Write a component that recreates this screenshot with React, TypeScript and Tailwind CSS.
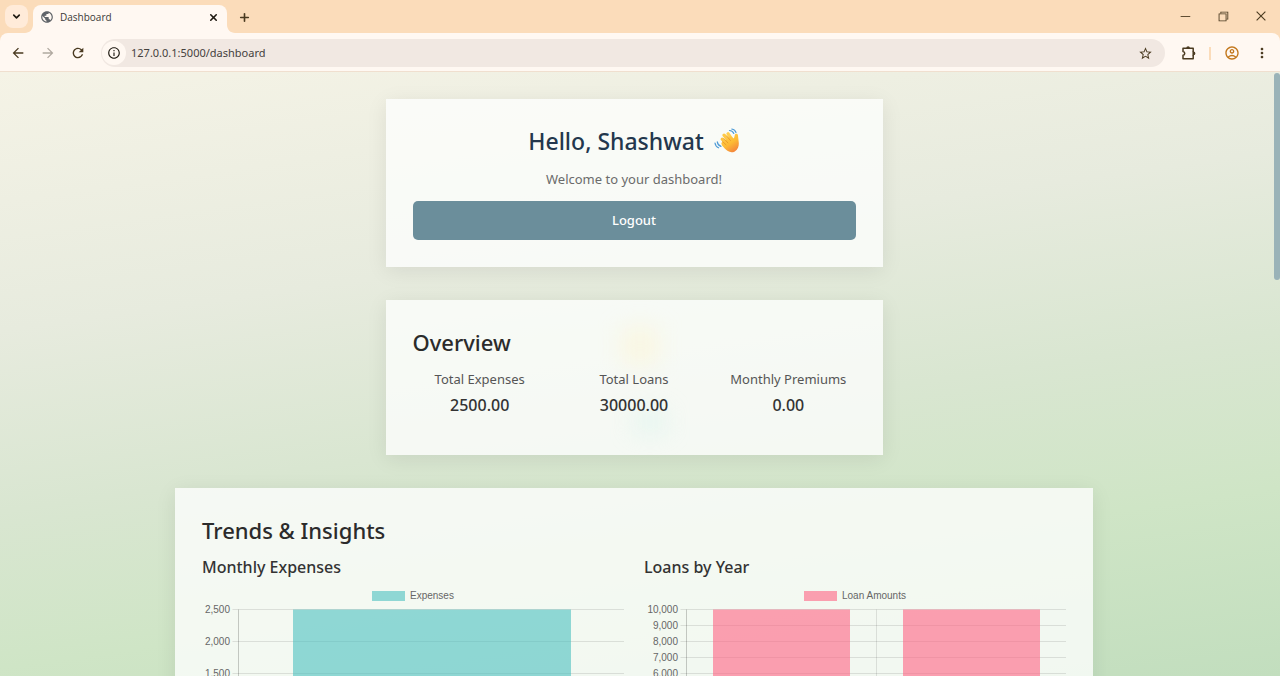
import {
  MdArrowBack,
  MdArrowForward,
  MdInfoOutline,
  MdMoreVert,
  MdOutlineAccountCircle,
  MdPublic,
  MdRefresh,
  MdStarBorder,
} from "react-icons/md";
import { VscChromeClose, VscChromeMinimize, VscChromeRestore } from "react-icons/vsc";
import { ChevronDown, Plus, X } from "lucide-react";
import type { ReactNode } from "react";

function TabFlare({ flip }: { flip?: boolean }) {
  return (
    <svg
      viewBox="0 0 8 8"
      aria-hidden="true"
      className={flip ? "absolute bottom-0 left-full size-2 -scale-x-100" : "absolute right-full bottom-0 size-2"}
    >
      <path d="M8 0v8H0c4.400 0 8-3.600 8-8z" fill="#fff8f2" />
    </svg>
  );
}

function IconButton({ label, children, className = "" }: { label: string; children: ReactNode; className?: string }) {
  return (
    <button type="button" aria-label={label} className={`flex shrink-0 items-center justify-center ${className}`}>
      {children}
    </button>
  );
}

function PuzzleIcon() {
  return (
    <svg viewBox="0 0 16 16" className="size-4" aria-hidden="true">
      <path
        d="M12.200 6.500V3.200H2v3.400c2.300.4 2.300 3.300 0 3.700v3.500h10.200V10"
        fill="none"
        stroke="#4a3a20"
        strokeWidth="1.500"
        strokeLinejoin="round"
      />
      <path d="M12.200 6v4.500" stroke="#4a3a20" strokeWidth="1.500" />
      <path d="M5.300 3a1.800 1.800 0 0 1 3.600 0zM12.600 6.600a1.800 1.800 0 0 1 0 3.600z" fill="#4a3a20" />
    </svg>
  );
}

function WavingHand() {
  return (
    <svg viewBox="0 0 26 26" role="img" aria-label="waving hand" className="size-[26px]">
      <defs>
        <linearGradient id="skin" x1="0" y1="0" x2="0.600" y2="1">
          <stop offset="0" stopColor="#ffd152" />
          <stop offset="0.600" stopColor="#fdbb35" />
          <stop offset="1" stopColor="#f58a3c" />
        </linearGradient>
      </defs>
      <g strokeLinecap="round" fill="none">
        <path d="M9 15.500l5 4.500" stroke="#fcbc38" strokeWidth="3.200" />
        <path d="M8.200 11.200l6 6" stroke="#fdc443" strokeWidth="3.200" />
        <path d="M10 7.200l6.500 7.500" stroke="#fec948" strokeWidth="3.300" />
        <path d="M14 5.800l5 7" stroke="#ffce50" strokeWidth="3.200" />
      </g>
      <path
        d="M9 14l7-6 3.500 2.500c.8-.8 1-2.200 1.300-3.600.4-1.600 2.700-1.600 3.100.2.300 1.700.3 3.600.7 5.800.5 3.200.3 6.200-1.800 8.800-2.300 2.800-6 3.300-9 1.400-2.300-1.500-4.500-4-6-6z"
        fill="url(#skin)"
      />
      <path
        d="M9.900 10.500l4 4.400M12.800 8l3.600 4.500M8.600 13.600l3.400 3.200"
        fill="none"
        stroke="#e38d22"
        strokeWidth="0.700"
        strokeLinecap="round"
      />
      <path
        d="M15.500 2.500c2.200.1 3.600 1.100 4.300 3M17.800 1c2.200.4 3.600 1.600 4.200 3.500M3.300 13.800c.3 2.300 1.500 3.800 3.700 4.600M1 15c.3 2.300 1.500 3.900 3.600 4.800"
        fill="none"
        stroke="#4d9ad6"
        strokeWidth="1.200"
        strokeLinecap="round"
      />
    </svg>
  );
}

type BarChartProps = {
  legend: string;
  color: string;
  ticks: string[];
  labelRight: number;
  axisX: number;
  bars: { x: number; width: number }[];
  legendX: number;
  separators: number[];
};

const CHART_TOP = 24.5;
const CHART_BOTTOM = 184.5;
const CHART_RIGHT = 422;

function BarChart({ legend, color, ticks, labelRight, axisX, bars, legendX, separators }: BarChartProps) {
  const step = (CHART_BOTTOM - CHART_TOP) / (ticks.length - 1);
  return (
    <svg
      viewBox="0 0 422 211"
      role="img"
      aria-label={legend}
      className="block w-full font-['Liberation_Sans',Arial,sans-serif] text-[10px]"
    >
      {ticks.map((tick, i) => (
        <g key={tick}>
          <path d={`M${axisX - 6} ${CHART_TOP + i * step}H${CHART_RIGHT}`} stroke="#000" strokeOpacity="0.1" />
          <text x={labelRight} y={CHART_TOP + i * step + 3} textAnchor="end" fill="#666">
            {tick}
          </text>
        </g>
      ))}
      {[axisX, ...separators].map((x, i) => (
        <path key={x} d={`M${x} ${CHART_TOP}V${CHART_BOTTOM + 6}`} stroke="#000" strokeOpacity={i === 0 ? 0.2 : 0.1} />
      ))}
      {bars.map((bar) => (
        <rect
          key={bar.x}
          x={bar.x}
          y={CHART_TOP}
          width={bar.width}
          height={CHART_BOTTOM - CHART_TOP}
          fill={color}
          fillOpacity="0.6"
        />
      ))}
      <rect x={legendX} y="6" width="33" height="10" fill={color} fillOpacity="0.6" />
      <text x={legendX + 38} y="14" fill="#666">
        {legend}
      </text>
    </svg>
  );
}

function Card({ children, className }: { children: ReactNode; className: string }) {
  return (
    <section className={`w-full bg-[#fdfefd]/80 p-[27px] shadow-[0_4px_20px_rgba(0,0,0,0.08)] ${className}`}>
      {children}
    </section>
  );
}

const stats = [
  { label: "Total Expenses", value: "2500.00" },
  { label: "Total Loans", value: "30000.00" },
  { label: "Monthly Premiums", value: "0.00" },
];

function BrowserChrome() {
  return (
    <header className="shrink-0 bg-[#fbdcba] text-[#4a3a20]">
      <div className="flex h-[33px] items-end">
        <IconButton label="Search tabs" className="mb-[5px] ml-[5px] size-[23px] rounded-lg bg-[#ffebd9] text-[#1f1a12]">
          <ChevronDown className="size-[11px]" strokeWidth={3.5} />
        </IconButton>
        <div className="relative ml-[5px] flex h-7 w-[194px] items-center rounded-t-lg bg-[#fff8f2] pr-2 pb-1 pl-[7px]">
          <TabFlare />
          <MdPublic className="size-[14px] text-[#5f6368]" />
          <span className="ml-1.5 flex-1 font-['Open_Sans','Noto_Sans',sans-serif] text-[10px] text-[#3c3a38]">
            Dashboard
          </span>
          <IconButton label="Close tab" className="text-[#1f1a12]">
            <X className="size-[11px]" strokeWidth={3.5} />
          </IconButton>
          <TabFlare flip />
        </div>
        <IconButton label="New tab" className="mb-2 ml-[9px] size-4">
          <Plus className="size-[13px]" strokeWidth={3} />
        </IconButton>
        <div className="mb-[10px] ml-auto flex items-center gap-6 pr-3">
          <IconButton label="Minimize">
            <VscChromeMinimize className="size-[14px]" />
          </IconButton>
          <IconButton label="Restore">
            <VscChromeRestore className="size-[14px]" />
          </IconButton>
          <IconButton label="Close window">
            <VscChromeClose className="size-[14px]" />
          </IconButton>
        </div>
      </div>
      <div className="flex h-[39px] items-center rounded-t-lg border-b border-[#f0dfcf] bg-[#fff8f2] pt-0.5 pr-[10px] pl-[11px]">
        <div className="flex gap-4">
          <IconButton label="Back" className="size-[14px]">
            <MdArrowBack className="size-4 shrink-0" />
          </IconButton>
          <IconButton label="Forward" className="size-[14px] text-[#b0a9a0]">
            <MdArrowForward className="size-4 shrink-0" />
          </IconButton>
          <IconButton label="Reload" className="size-[14px]">
            <MdRefresh className="size-4 shrink-0" />
          </IconButton>
        </div>
        <div className="ml-4 flex h-7 flex-1 items-center rounded-full bg-[#f1e8e2] pr-3 pl-px">
          <IconButton label="Site information" className="size-6 rounded-full bg-[#fff8f2] text-[#1f1a12]">
            <MdInfoOutline className="size-[14px]" />
          </IconButton>
          <input
            aria-label="Address"
            defaultValue="127.0.0.1:5000/dashboard"
            className="ml-[5px] min-w-0 flex-1 bg-transparent text-[11px] text-[#45413d] outline-none"
          />
          <IconButton label="Bookmark">
            <MdStarBorder className="size-[15px]" />
          </IconButton>
        </div>
        <IconButton label="Extensions" className="ml-4 size-4">
          <PuzzleIcon />
        </IconButton>
        <span className="ml-3 h-[13px] w-0.5 bg-[#fbdcba]" />
        <IconButton label="Profile" className="ml-[13px] text-[#c2761a]">
          <MdOutlineAccountCircle className="size-4" />
        </IconButton>
        <IconButton label="Menu" className="ml-[14px]">
          <MdMoreVert className="size-4" />
        </IconButton>
      </div>
    </header>
  );
}

export default function App() {
  return (
    <div className="flex h-screen flex-col font-['Noto_Sans','Open_Sans',sans-serif]">
      <BrowserChrome />
      <div className="flex min-h-0 flex-1 bg-[linear-gradient(172deg,#f5f3e6_0%,#e7ebde_33%,#d9e6d1_56%,#cfe5c6_76%,#c2debe_100%)]">
        <main className="flex min-w-0 flex-1 flex-col items-center gap-[33px] overflow-y-auto pt-[27px] pb-8 [scrollbar-width:none] *:shrink-0">
          <Card className="max-w-[497px] text-center">
            <h1 className="flex items-center justify-center gap-[10px] text-[23px] leading-[30px] font-medium text-[#23374d]">
              Hello, Shashwat
              <WavingHand />
            </h1>
            <p className="mt-[13px] text-[13px] leading-5 text-[#6b6b6b]">Welcome to your dashboard!</p>
            <button
              type="button"
              className="mt-3 block h-[39px] w-full rounded-[5px] bg-[#6b8e9b] text-[13px] font-medium text-white"
            >
              Logout
            </button>
          </Card>

          <Card className="relative max-w-[497px]">
            <div
              aria-hidden="true"
              className="pointer-events-none absolute top-7 left-1/2 h-9 w-9 -translate-x-3 bg-[#fff3c4]/40 blur-md"
            />
            <div
              aria-hidden="true"
              className="pointer-events-none absolute bottom-6 left-1/2 h-5 w-8 bg-[#c8efe8]/40 blur-md"
            />
            <h2 className="relative text-[22px] leading-[30px] font-medium text-[#2b2b2b]">Overview</h2>
            <dl className="relative mt-3 mb-[11px] grid grid-cols-3 gap-5 text-center">
              {stats.map((stat) => (
                <div key={stat.label}>
                  <dt className="text-[13px] leading-5 whitespace-nowrap text-[#555]">{stat.label}</dt>
                  <dd className="mt-1 text-base leading-6 font-medium text-[#333]">{stat.value}</dd>
                </div>
              ))}
            </dl>
          </Card>

          <Card className="max-w-[918px]">
            <h2 className="text-[22px] leading-[30px] font-medium text-[#2b2b2b]">Trends &amp; Insights</h2>
            <div className="mt-[10px] grid grid-cols-2 gap-5">
              <div>
                <h3 className="mb-1.5 text-base leading-6 font-medium text-[#333]">Monthly Expenses</h3>
                <BarChart
                  legend="Expenses"
                  color="#4bc0c0"
                  ticks={["2,500", "2,000", "1,500", "1,000", "500", "0"]}
                  labelRight={28}
                  axisX={36.5}
                  bars={[{ x: 91, width: 278 }]}
                  legendX={170}
                  separators={[]}
                />
              </div>
              <div>
                <h3 className="mb-1.5 text-base leading-6 font-medium text-[#333]">Loans by Year</h3>
                <BarChart
                  legend="Loan Amounts"
                  color="#ff6384"
                  ticks={["10,000", "9,000", "8,000", "7,000", "6,000", "5,000", "4,000", "3,000", "2,000", "1,000", "0"]}
                  labelRight={34}
                  axisX={42.5}
                  bars={[
                    { x: 69, width: 137 },
                    { x: 259, width: 137 },
                  ]}
                  legendX={160}
                  separators={[232.5]}
                />
              </div>
            </div>
          </Card>
        </main>
        <div aria-hidden="true" className="flex w-3 justify-end pt-px">
          <span className="h-[207px] w-1.5 rounded-[3px] bg-[#9ab3b8]" />
        </div>
      </div>
    </div>
  );
}
